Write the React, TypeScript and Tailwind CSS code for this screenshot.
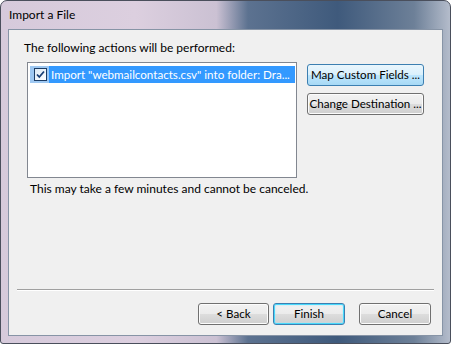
import React from 'react';

const font = { fontFamily: 'Lato, "Open Sans", sans-serif' };

function Btn({ label, kind = 'normal', className = '' }: { label: string; kind?: 'normal' | 'hover' | 'default'; className?: string }) {
  const look =
    kind === 'hover'
      ? 'border-[#3c7fb1] bg-[linear-gradient(#eaf6fd_0%,#d9f0fc_50%,#bee6fd_50%,#a7d9f5_100%)]'
      : kind === 'default'
      ? 'border-[#3c7fb1] bg-[linear-gradient(#f2f2f2_0%,#ebebeb_50%,#dddddd_50%,#cfcfcf_100%)] shadow-[inset_0_0_0_1px_#48d8fb,inset_0_0_2px_1px_#a9e6fb]'
      : 'border-[#707070] bg-[linear-gradient(#f2f2f2_0%,#ebebeb_50%,#dddddd_50%,#cfcfcf_100%)] shadow-[inset_0_0_0_1px_#fcfcfc]';
  return (
    <div className={`h-[22px] rounded-[3px] border flex items-center justify-center text-[11.6px] text-black whitespace-nowrap ${look} ${className}`}>
      {label}
    </div>
  );
}

export default function App() {
  return (
    <div className="w-[451px] h-[344px] overflow-hidden" style={font}>
      <div className="w-full h-full rounded-t-[7px] rounded-b-[3px] border border-[#4a4f5c] flex flex-col bg-[linear-gradient(90deg,#d6cadb_0%,#dccfdf_30%,#cbc1d3_48%,#5c7290_55%,#3f5a7c_75%,#6d8098_92%,#b4bccb_100%)]">
        <div className="h-[28px] flex items-center pl-[8px] text-[12px] text-black">Import a File</div>
        <div className="mx-[7px] h-[307px] border border-[#8794a6] bg-[#f0f0f0] flex flex-col">
          <div className="pl-[15px] pt-[10px] text-[12px] leading-[16px] text-black">The following actions will be performed:</div>
          <div className="flex mt-[6px] ml-[18px]">
            <div className="w-[270px] h-[116px] border border-[#828790] bg-white pl-[2px] pr-[1px] pt-[2px]">
              <div className="flex h-[17px] mt-[1px]">
                <div className="w-[19px] flex items-center pl-[4px] bg-[#9ec8f2]">
                  <div className="w-[13px] h-[13px] border border-[#1c3c64] bg-[linear-gradient(135deg,#dbe9f5,#ffffff)] flex items-center justify-center">
                    <svg width="11" height="11" viewBox="0 0 11 11">
                      <path d="M2 5.5 L4.3 8 L9 2.5" fill="none" stroke="#1a3f75" strokeWidth="1.8" />
                    </svg>
                  </div>
                </div>
                <div className="flex-1 bg-[#3399ff] text-white text-[11.6px] leading-[17px] pl-[2px] whitespace-nowrap overflow-hidden">
                  Import "webmailcontacts.csv" into folder: Dra...
                </div>
              </div>
            </div>
            <div className="ml-[10px] mt-[2px] flex flex-col gap-[7px]">
              <Btn label="Map Custom Fields ..." kind="hover" className="w-[117px]" />
              <Btn label="Change Destination ..." className="w-[117px]" />
            </div>
          </div>
          <div className="pl-[21px] mt-[3px] text-[12px] leading-[16px] text-black">This may take a few minutes and cannot be canceled.</div>
          <div className="flex-1" />
          <div className="mx-[8px] border-t border-[#a0a0a0] shadow-[0_1px_0_#ffffff]" />
          <div className="flex justify-end gap-[4px] pr-[11px] pt-[13px] pb-[10px]">
            <Btn label="< Back" className="w-[71px]" />
            <Btn label="Finish" kind="default" className="w-[72px]" />
            <Btn label="Cancel" className="w-[72px] ml-[10px]" />
          </div>
        </div>
      </div>
    </div>
  );
}
